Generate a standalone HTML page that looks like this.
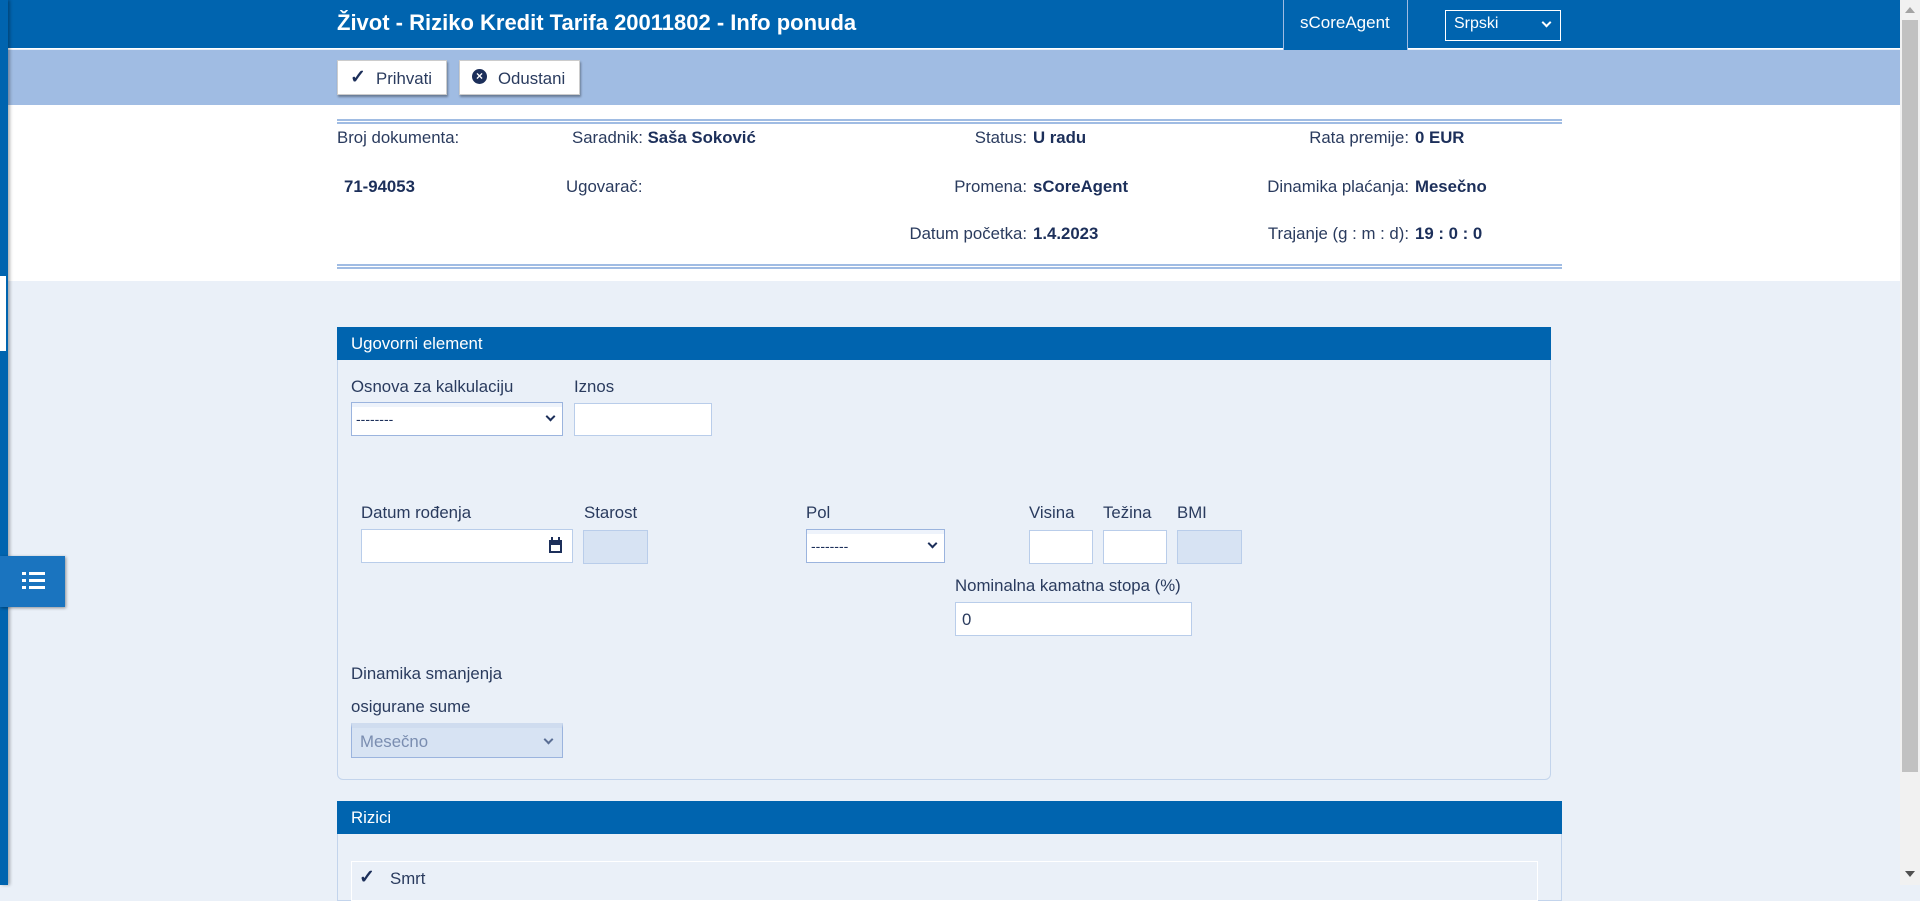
<!DOCTYPE html>
<html><head><meta charset="utf-8"><style>
*{box-sizing:border-box;margin:0;padding:0}
body{width:1920px;height:885px;overflow:hidden;background:#EAF0F8;font-family:"Liberation Sans",Arial,sans-serif;color:#2a3b5e;position:relative}
.a{position:absolute;white-space:nowrap}
.lbl{font-size:16.8px;line-height:18px}
.b{font-weight:bold;color:#1c2f5a}
.inp{position:absolute;background:#fff;border:1px solid #b9cdea}
.dis{position:absolute;background:#D7E3F3;border:1px solid #b9cdea}
.sel{position:absolute;background:linear-gradient(#eef3fb 0,#eef3fb 4px,#fff 4px);border:1.5px solid #9bb4de;font-size:14px}
.sel span{position:absolute;left:4px;top:8px;color:#1c2f5a}
.chev{position:absolute;right:8px;top:10px;width:7px;height:7px;border-right:2px solid #1c2f5a;border-bottom:2px solid #1c2f5a;transform:rotate(45deg)}
</style></head><body>
<div class="a" style="left:0;top:0;width:1900px;height:49px;background:#0064AF;border-bottom:1px solid #fff"></div>
<div class="a" style="left:337px;top:10px;font-size:22px;font-weight:bold;color:#fff">Život - Riziko Kredit Tarifa 20011802 - Info ponuda</div>
<div class="a" style="left:1283px;top:0;width:125px;height:50px;background:#0064AF;border-left:1px solid #9fbbe2;border-right:1px solid #9fbbe2"></div>
<div class="a" style="left:1300px;top:13px;font-size:17px;color:#fff">sCoreAgent</div>
<div class="a" style="left:1445px;top:10px;width:116px;height:31px;border:1.5px solid #fff"></div>
<div class="a" style="left:1454px;top:15px;font-size:16px;color:#fff">Srpski</div>
<div class="a" style="left:1543px;top:19px;width:7px;height:7px;border-right:2px solid #fff;border-bottom:2px solid #fff;transform:rotate(45deg)"></div>
<div class="a" style="left:0;top:50px;width:1900px;height:55px;background:#A0BCE3"></div>
<div class="a" style="left:337px;top:60px;width:110px;height:35px;background:#fff;border:1px solid #ccc;box-shadow:1px 2px 2px rgba(0,0,0,.35)"></div>
<div class="a" style="left:350px;top:66px;font-size:19px;font-weight:bold;color:#1c2f5a">✓</div>
<div class="a" style="left:376px;top:69px;font-size:16.8px;color:#2a3b5e">Prihvati</div>
<div class="a" style="left:459px;top:60px;width:121px;height:35px;background:#fff;border:1px solid #ccc;box-shadow:1px 2px 2px rgba(0,0,0,.35)"></div>
<div class="a" style="left:472px;top:69px;width:15px;height:15px;border-radius:50%;background:#1c2f5a;color:#fff;font-size:12px;line-height:15px;text-align:center;font-weight:bold">×</div>
<div class="a" style="left:498px;top:69px;font-size:16.8px;color:#2a3b5e">Odustani</div>
<div class="a" style="left:0;top:105px;width:1900px;height:176px;background:#fff"></div>
<div class="a" style="left:337px;top:119px;width:1225px;height:5px;border-top:2px solid #A0BCE3;border-bottom:2px solid #A0BCE3"></div>
<div class="a" style="left:337px;top:264px;width:1225px;height:5px;border-top:2px solid #A0BCE3;border-bottom:2px solid #A0BCE3"></div>
<div class="a lbl" style="left:337px;top:129px">Broj dokumenta:</div>
<div class="a lbl" style="left:572px;top:129px">Saradnik: <span class="b">Saša Soković</span></div>
<div class="a lbl b" style="left:344px;top:178px">71-94053</div>
<div class="a lbl" style="left:566px;top:178px">Ugovarač:</div>
<div class="a lbl" style="right:893px;top:129px">Status:</div><div class="a lbl b" style="left:1033px;top:129px">U radu</div>
<div class="a lbl" style="right:893px;top:178px">Promena:</div><div class="a lbl b" style="left:1033px;top:178px">sCoreAgent</div>
<div class="a lbl" style="right:893px;top:225px">Datum početka:</div><div class="a lbl b" style="left:1033px;top:225px">1.4.2023</div>
<div class="a lbl" style="right:511px;top:129px">Rata premije:</div><div class="a lbl b" style="left:1415px;top:129px">0 EUR</div>
<div class="a lbl" style="right:511px;top:178px">Dinamika plaćanja:</div><div class="a lbl b" style="left:1415px;top:178px">Mesečno</div>
<div class="a lbl" style="right:511px;top:225px">Trajanje (g : m : d):</div><div class="a lbl b" style="left:1415px;top:225px">19 : 0 : 0</div>
<div class="a" style="left:0;top:0;width:8px;height:885px;background:#0064AF;box-shadow:2px 0 3px rgba(0,0,0,.3)"></div>
<div class="a" style="left:0;top:276px;width:6px;height:75px;background:#fff"></div>
<div class="a" style="left:0;top:556px;width:65px;height:51px;background:#1a74bf;box-shadow:1px 1px 3px rgba(0,0,0,.4)"></div>
<svg class="a" style="left:22px;top:571px" width="24" height="20" viewBox="0 0 24 20"><g fill="#fff"><rect x="0" y="1" width="4" height="3"/><rect x="0" y="8" width="4" height="3"/><rect x="0" y="15" width="4" height="3"/><rect x="7" y="1" width="16" height="3"/><rect x="7" y="8" width="16" height="3"/><rect x="7" y="15" width="16" height="3"/></g></svg>
<div class="a" style="left:337px;top:327px;width:1214px;height:453px;border:1px solid #c3d4ec;border-radius:0 0 6px 6px"></div>
<div class="a" style="left:337px;top:327px;width:1214px;height:33px;background:#0064AF"></div>
<div class="a" style="left:351px;top:334px;font-size:16.8px;color:#fff">Ugovorni element</div>
<div class="a lbl" style="left:351px;top:378px">Osnova za kalkulaciju</div>
<div class="a lbl" style="left:574px;top:378px">Iznos</div>
<div class="sel" style="left:351px;top:402px;width:212px;height:34px"><span>--------</span><i class="chev"></i></div>
<div class="inp" style="left:574px;top:403px;width:138px;height:33px"></div>
<div class="a lbl" style="left:361px;top:504px">Datum rođenja</div>
<div class="a lbl" style="left:584px;top:504px">Starost</div>
<div class="a lbl" style="left:806px;top:504px">Pol</div>
<div class="a lbl" style="left:1029px;top:504px">Visina</div>
<div class="a lbl" style="left:1103px;top:504px">Težina</div>
<div class="a lbl" style="left:1177px;top:504px">BMI</div>
<div class="inp" style="left:361px;top:529px;width:212px;height:34px"></div>
<svg class="a" style="left:548px;top:537px" width="15" height="17" viewBox="0 0 15 17"><rect x="1" y="3" width="13" height="13" fill="#1c2f5a"/><rect x="3" y="8" width="9" height="6" fill="#fff"/><rect x="3" y="0" width="2" height="4" fill="#1c2f5a"/><rect x="10" y="0" width="2" height="4" fill="#1c2f5a"/></svg>
<div class="dis" style="left:583px;top:530px;width:65px;height:34px"></div>
<div class="sel" style="left:806px;top:529px;width:139px;height:34px"><span>--------</span><i class="chev"></i></div>
<div class="inp" style="left:1029px;top:530px;width:64px;height:34px"></div>
<div class="inp" style="left:1103px;top:530px;width:64px;height:34px"></div>
<div class="dis" style="left:1177px;top:530px;width:65px;height:34px"></div>
<div class="a lbl" style="left:955px;top:577px">Nominalna kamatna stopa (%)</div>
<div class="inp" style="left:955px;top:602px;width:237px;height:34px"></div>
<div class="a" style="left:962px;top:610px;font-size:16.8px">0</div>
<div class="a lbl" style="left:351px;top:665px">Dinamika smanjenja</div>
<div class="a lbl" style="left:351px;top:698px">osigurane sume</div>
<div class="a" style="left:351px;top:723px;width:212px;height:35px;background:#D7E3F3;border:1.5px solid #9bb4de;border-top:5px solid #cfdcef"></div>
<div class="a" style="left:360px;top:732px;font-size:16.8px;color:#7a8db0">Mesečno</div>
<div class="a" style="left:545px;top:736px;width:7px;height:7px;border-right:2px solid #5a6e94;border-bottom:2px solid #5a6e94;transform:rotate(45deg)"></div>
<div class="a" style="left:337px;top:801px;width:1225px;height:100px;border:1px solid #c3d4ec"></div>
<div class="a" style="left:337px;top:801px;width:1225px;height:33px;background:#0064AF"></div>
<div class="a" style="left:351px;top:808px;font-size:16.8px;color:#fff">Rizici</div>
<div class="a" style="left:351px;top:861px;width:1187px;height:40px;border:1px solid #fff"></div>
<div class="a" style="left:359px;top:866px;font-size:19px;font-weight:bold;color:#1c2f5a">✓</div>
<div class="a lbl" style="left:390px;top:870px">Smrt</div>
<div class="a" style="left:1900px;top:0;width:20px;height:885px;background:#f1f1f1"></div>
<div class="a" style="left:1902px;top:20px;width:16px;height:752px;background:#c1c1c1"></div>
<div class="a" style="left:1905px;top:7px;width:0;height:0;border-left:5px solid transparent;border-right:5px solid transparent;border-bottom:6px solid #a3a3a3"></div>
<div class="a" style="left:1905px;top:871px;width:0;height:0;border-left:5px solid transparent;border-right:5px solid transparent;border-top:6px solid #505050"></div>
</body></html>
